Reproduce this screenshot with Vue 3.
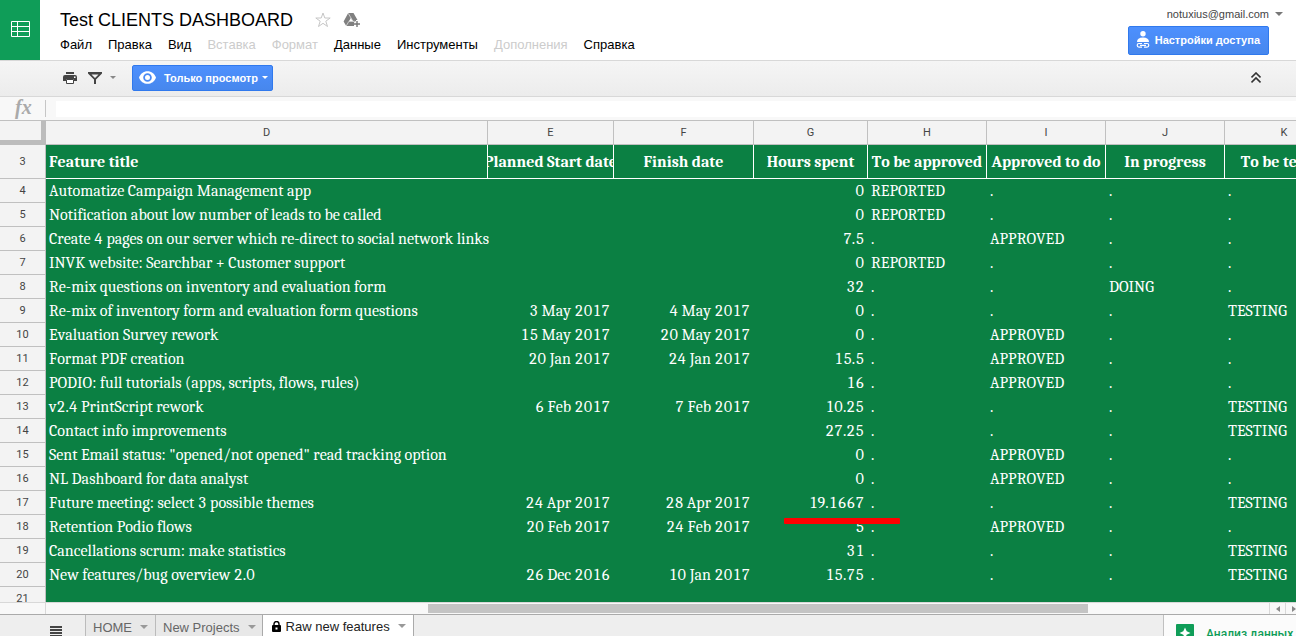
<script setup>
const menus = [
  { label: 'Файл' },
  { label: 'Правка' },
  { label: 'Вид' },
  { label: 'Вставка', off: true },
  { label: 'Формат', off: true },
  { label: 'Данные' },
  { label: 'Инструменты' },
  { label: 'Дополнения', off: true },
  { label: 'Справка' },
]

const letters = ['D', 'E', 'F', 'G', 'H', 'I', 'J', 'K']
const titles = [
  'Feature title', 'Planned Start date', 'Finish date', 'Hours spent',
  'To be approved', 'Approved to do', 'In progress', 'To be tested',
]

const R = ['REPORTED', '.', '.', '.']
const A = ['.', 'APPROVED', '.', '.']
const D = ['.', '.', 'DOING', '.']
const T = ['.', '.', '.', 'TESTING']

const rows = [
  ['Automatize Campaign Management app', '', '', '0', R],
  ['Notification about low number of leads to be called', '', '', '0', R],
  ['Create 4 pages on our server which re-direct to social network links', '', '', '7.5', A],
  ['INVK website: Searchbar + Customer support', '', '', '0', R],
  ['Re-mix questions on inventory and evaluation form', '', '', '32', D],
  ['Re-mix of inventory form and evaluation form questions', '3 May 2017', '4 May 2017', '0', T],
  ['Evaluation Survey rework', '15 May 2017', '20 May 2017', '0', A],
  ['Format PDF creation', '20 Jan 2017', '24 Jan 2017', '15.5', A],
  ['PODIO: full tutorials (apps, scripts, flows, rules)', '', '', '16', A],
  ['v2.4 PrintScript rework', '6 Feb 2017', '7 Feb 2017', '10.25', T],
  ['Contact info improvements', '', '', '27.25', T],
  ['Sent Email status: "opened/not opened" read tracking option', '', '', '0', A],
  ['NL Dashboard for data analyst', '', '', '0', A],
  ['Future meeting: select 3 possible themes', '24 Apr 2017', '28 Apr 2017', '19.1667', T],
  ['Retention Podio flows', '20 Feb 2017', '24 Feb 2017', '5', A],
  ['Cancellations scrum: make statistics', '', '', '31', T],
  ['New features/bug overview 2.0', '26 Dec 2016', '10 Jan 2017', '15.75', T],
  ['', '', '', '', ['', '', '', '']],
].map(([title, start, finish, hours, status], i) => ({ n: i + 4, title, start, finish, hours, status }))
</script>

<template>
  <div class="page">
    <header class="top">
      <a class="home" href="#" aria-label="Sheets">
        <svg width="19" height="16" viewBox="0 0 19 16" fill="none" stroke="#fff">
          <path d="M.5 .5h18v15H.5zM.5 5.5h18M.5 10.5h18M6.5 .5v15" />
        </svg>
      </a>
      <div class="heading">
        <div class="name">
          <h1>Test CLIENTS DASHBOARD</h1>
          <button class="plain star" aria-label="Star">
            <svg width="16" height="16" viewBox="0 0 16 16" fill="none" stroke="#c6c6c6">
              <path d="M8 1l1.800 5h5.400l-4.400 3.200 1.700 5.300L8 11.300 3.500 14.500l1.700-5.300L.8 6h5.400z" />
            </svg>
          </button>
          <button class="plain" aria-label="Add to Drive">
            <svg width="18" height="16" viewBox="0 0 18 16">
              <path d="M5.200 1h5.300l4 7H13v2.500h-2V14H3.200L.6 9.500z" fill="#808080" />
              <path d="M7.800 6L9.700 9.300H6z" fill="#fff" />
              <path d="M5.200 1.200l5 8.500M3.200 14l2.700-4.700h6" stroke="#fff" stroke-width=".6" fill="none" />
              <path d="M14 9v6M11 12h6" stroke="#fff" stroke-width="3.500" />
              <path d="M14 9v6M11 12h6" stroke="#777" stroke-width="1.400" />
            </svg>
          </button>
        </div>
        <nav class="menus">
          <button v-for="m in menus" :key="m.label" class="plain" :disabled="m.off">{{ m.label }}</button>
        </nav>
      </div>
      <div class="account">
        <button class="plain mail">notuxius@gmail.com <i class="caret"></i></button>
        <button class="blue share">
          <svg width="14" height="17" viewBox="0 0 14 17" fill="#fff">
            <circle cx="7" cy="2.700" r="2.700" />
            <path d="M1 11c0-3 2-4.500 6-4.500s6 1.500 6 4.500z" />
            <g fill="none" stroke="#fff" stroke-width="1.200">
              <path d="M6 12.500H3a1.800 1.800 0 0 0 0 3.600h3M8 12.500h3a1.800 1.800 0 0 1 0 3.600H8M4 14.300h6" />
            </g>
          </svg>
          Настройки доступа
        </button>
      </div>
    </header>

    <div class="toolbar">
      <button class="plain print" aria-label="Print">
        <svg width="14" height="12" viewBox="0 0 14 12" fill="#444">
          <path d="M3 0h8v2H3zM2 3h10a2 2 0 0 1 2 2v4h-3V7H3v2H0V5a2 2 0 0 1 2-2z" />
          <path d="M3.500 7.500h7v4h-7z" fill="#fff" stroke="#444" />
          <path d="M11 4.500h1.500V6H11z" fill="#fff" />
        </svg>
      </button>
      <button class="plain filter" aria-label="Filter">
        <svg width="14" height="12" viewBox="0 0 14 12" fill="#444">
          <path fill-rule="evenodd" d="M0 0h14v1.500L8 7.500V12H6V7.500L0 1.500zM3.500 2.500L7 6l3.500-3.500z" />
        </svg>
        <i class="caret small"></i>
      </button>
      <button class="blue view">
        <svg width="17" height="13" viewBox="0 0 17 13">
          <path d="M0 6.500C1.500 2.500 4.500 .2 8.500 .2s7 2.300 8.500 6.300c-1.500 4-4.500 6.300-8.500 6.300S1.500 10.500 0 6.500z" fill="#fff" />
          <circle cx="8.500" cy="6.500" r="3.400" fill="#fff" stroke="#4b8bf5" stroke-width="1.800" />
        </svg>
        <span>Только просмотр</span>
        <i class="caret small light"></i>
      </button>
      <button class="plain fold" aria-label="Collapse">
        <svg width="10" height="12" viewBox="0 0 10 12" fill="none" stroke="#333" stroke-width="1.600">
          <path d="M.5 5.500L5 1l4.500 4.500M.5 10.500L5 6l4.500 4.500" />
        </svg>
      </button>
    </div>

    <div class="formula">
      <label for="fx">fx</label>
      <input id="fx" type="text" readonly />
    </div>

    <main class="sheet">
      <table>
        <colgroup>
          <col class="c-n" /><col class="c-d" /><col class="c-e" /><col class="c-f" /><col class="c-g" />
          <col class="c-s" /><col class="c-s" /><col class="c-s" /><col class="c-s" />
        </colgroup>
        <thead>
          <tr class="letters">
            <th class="corner"></th>
            <th v-for="l in letters" :key="l">{{ l }}</th>
          </tr>
        </thead>
        <tbody>
          <tr class="titles">
            <th class="num">3</th>
            <td v-for="t in titles" :key="t"><div>{{ t }}</div></td>
          </tr>
          <tr v-for="r in rows" :key="r.n">
            <th class="num">{{ r.n }}</th>
            <td>{{ r.title }}</td>
            <td class="right">{{ r.start }}</td>
            <td class="right">{{ r.finish }}</td>
            <td class="right">{{ r.hours }}<i v-if="r.n === 17" class="mark"></i></td>
            <td v-for="(s, i) in r.status" :key="i">{{ s }}</td>
          </tr>
        </tbody>
      </table>
    </main>

    <div class="scroll">
      <div class="track"><div class="thumb"></div></div>
      <button class="plain step" aria-label="Scroll left"><i class="arrow left"></i></button>
      <button class="plain step" aria-label="Scroll right"><i class="arrow"></i></button>
    </div>

    <footer class="tabs">
      <button class="plain all" aria-label="All sheets">
        <svg width="12" height="11" viewBox="0 0 12 11" fill="#444">
          <path d="M0 0h12v2H0zM0 3h12v2H0zM0 6h12v2H0zM0 9h12v2H0z" />
        </svg>
      </button>
      <button class="tab">HOME <i class="caret"></i></button>
      <button class="tab">New Projects <i class="caret"></i></button>
      <button class="tab active">
        <svg width="9" height="11" viewBox="0 0 9 11">
          <path d="M2 5V3a2.500 2.500 0 0 1 5 0v2" fill="none" stroke="#000" stroke-width="1.400" />
          <rect y="4" width="9" height="7" rx="1" />
          <rect x="3.500" y="6.500" width="2" height="2" fill="#fff" />
        </svg>
        Raw new features <i class="caret"></i>
      </button>
      <button class="explore">
        <svg width="18" height="18" viewBox="0 0 18 18">
          <rect width="18" height="18" rx="1" fill="#0f9d58" />
          <path d="M9 3.500l1.700 3.800L14.500 9l-3.800 1.700L9 14.500l-1.700-3.800L3.500 9l3.800-1.700z" fill="#fff" />
        </svg>
        Анализ данных
      </button>
    </footer>
  </div>
</template>

<style>
body { margin: 0; overflow: hidden; }
</style>

<style scoped>
* { box-sizing: border-box; }
.page {
  height: 100vh;
  display: flex;
  flex-direction: column;
  background: #fff;
  font-family: "Liberation Sans", Arial, sans-serif;
  font-size: 13px;
  color: #000;
  overflow: hidden;
}
button { font: inherit; white-space: nowrap; }
.plain { border: 0; padding: 0; background: none; color: inherit; display: flex; align-items: center; }
svg { display: block; flex: none; }
.caret {
  border: 4px solid transparent;
  border-top-color: #777;
  border-bottom: 0;
  flex: none;
}
.caret.small { border-width: 3px 3px 0; }
.caret.light { border-top-color: #fff; }

.top { flex: none; height: 61px; display: flex; border-bottom: 1px solid #d8d8d8; }
.home { width: 40px; height: 60px; padding-bottom: 2px; background: #0f9d58; display: flex; align-items: center; justify-content: center; }
.heading { flex: 1; padding: 8px 0 0 20px; }
.name { display: flex; align-items: center; height: 24px; }
h1 { margin: 0; font-size: 18px; font-weight: 400; line-height: 24px; white-space: nowrap; }
.star { margin: 0 12px 0 22px; }
.menus { display: flex; gap: 16px; height: 24px; }
.menus button:disabled { color: #ccc; }
.account { display: flex; flex-direction: column; align-items: flex-end; padding: 6px 13px 0 0; }
.mail { font-size: 11px; color: #444; gap: 6px; height: 16px; }
.blue {
  display: flex;
  align-items: center;
  border: 1px solid #3079ed;
  border-radius: 2px;
  background: linear-gradient(#4d90fe, #4787ed);
  color: #fff;
  font-size: 11px;
  font-weight: 700;
}
.share { height: 29px; margin: 4px 14px 0 0; padding: 0 8px 2px 7px; gap: 5px; }

.toolbar {
  flex: none;
  height: 36px;
  display: flex;
  align-items: center;
  padding: 0 35px 2px 63px;
  background: linear-gradient(#f5f5f5, #ececec);
  border-bottom: 1px solid #d8d8d8;
}
.filter { margin-left: 11px; gap: 8px; }
.filter .caret { border-top-color: #888; }
.view { margin-left: 16px; height: 26px; padding: 0 4px 0 6px; }
.view span { margin: 0 4px 0 8px; }
.fold { margin-left: auto; }

.formula { flex: none; height: 24px; display: flex; align-items: center; background: #f8f8f8; border-bottom: 1px solid #c0c0c0; }
.formula label {
  width: 46px;
  height: 17px;
  padding-left: 15px;
  border-right: 1px solid #c6c6c6;
  font: italic 700 20px/14px "Liberation Serif", serif;
  color: #aaa;
}
.formula input { flex: 1; height: 16px; margin-left: 10px; border: 0; padding: 0; background: #fff; outline: 0; }

.sheet { flex: 1; min-height: 0; overflow: hidden; background: #0b8043; }
table { table-layout: fixed; width: 1344px; border-collapse: separate; border-spacing: 0; }
.c-n { width: 46px; }
.c-d { width: 442px; }
.c-e { width: 126px; }
.c-f { width: 140px; }
.c-g { width: 114px; }
.c-s { width: 119px; }
th {
  padding: 0;
  background: #f3f3f3;
  border: solid #c0c0c0;
  border-width: 0 1px 1px 0;
  font: 400 11px/13px Roboto, sans-serif;
  color: #444;
  text-align: center;
}
.num { padding-bottom: 1px; }
.letters th { height: 24px; }
.letters .corner { border: solid #bcbcbc; border-width: 0 5px 5px 0; }
td {
  position: relative;
  height: 24px;
  padding: 0 4px 0 3px;
  font: 400 16px/22px Cambria, Caladea, "Liberation Serif", serif;
  font-variant-numeric: tabular-nums;
  font-kerning: none;
  color: #fff;
  white-space: nowrap;
}
.right { text-align: right; }
.titles td { height: 34px; padding: 0; border: solid #fff; border-width: 0 1px 1px 0; font-weight: 700; }
.titles div { display: flex; justify-content: center; overflow: hidden; }
.titles td:nth-child(2) div { justify-content: flex-start; padding-left: 3px; }
.mark { position: absolute; z-index: 1; left: 30px; top: 27px; width: 116px; height: 6px; border-radius: 1px; background: #f00; }

.scroll { flex: none; height: 12px; display: flex; background: #f8f8f8; border-top: 1px solid #d8d8d8; }
.track { flex: 1; margin-left: 45px; border-left: 1px solid #d8d8d8; padding-top: 1px; }
.thumb { width: 54%; height: 9px; margin-left: 31.2%; background: #c4c4c4; }
.step { width: 16px; justify-content: center; border-left: 1px solid #d8d8d8; }
.step:last-child { width: 11px; justify-content: flex-end; }
.arrow { border: 3px solid transparent; border-left: 4px solid #888; border-right: 0; }
.arrow.left { border-left: 0; border-right: 4px solid #888; }

.tabs { flex: none; height: 22px; display: flex; background: #eee; border-top: 1px solid #aaa; overflow: hidden; }
.all { width: 85px; padding: 11px 0 0 50px; align-items: flex-start; }
.tab {
  display: flex;
  align-items: center;
  gap: 8px;
  height: 24px;
  padding: 0 7px;
  border: 0 solid #bbb;
  border-left-width: 1px;
  background: #e8e8e8;
  color: #666;
}
.tab .caret { border-top-color: #999; }
.tab.active { gap: 5px; margin: -1px 0 0 -1px; padding: 0 7px 0 9px; border: solid #aaa; border-width: 0 1px; background: #fff; color: #222; }
.tab.active .caret { margin-left: 3px; }
.explore {
  display: flex;
  align-items: flex-start;
  gap: 12px;
  height: 40px;
  width: 133px;
  margin-left: auto;
  padding: 9px 0 0 12px;
  border: 0;
  border-left: 1px solid #c0c0c0;
  background: #fbfbfb;
  color: #0f9d58;
  font: 500 12px/20px Roboto, sans-serif;
}
</style>
